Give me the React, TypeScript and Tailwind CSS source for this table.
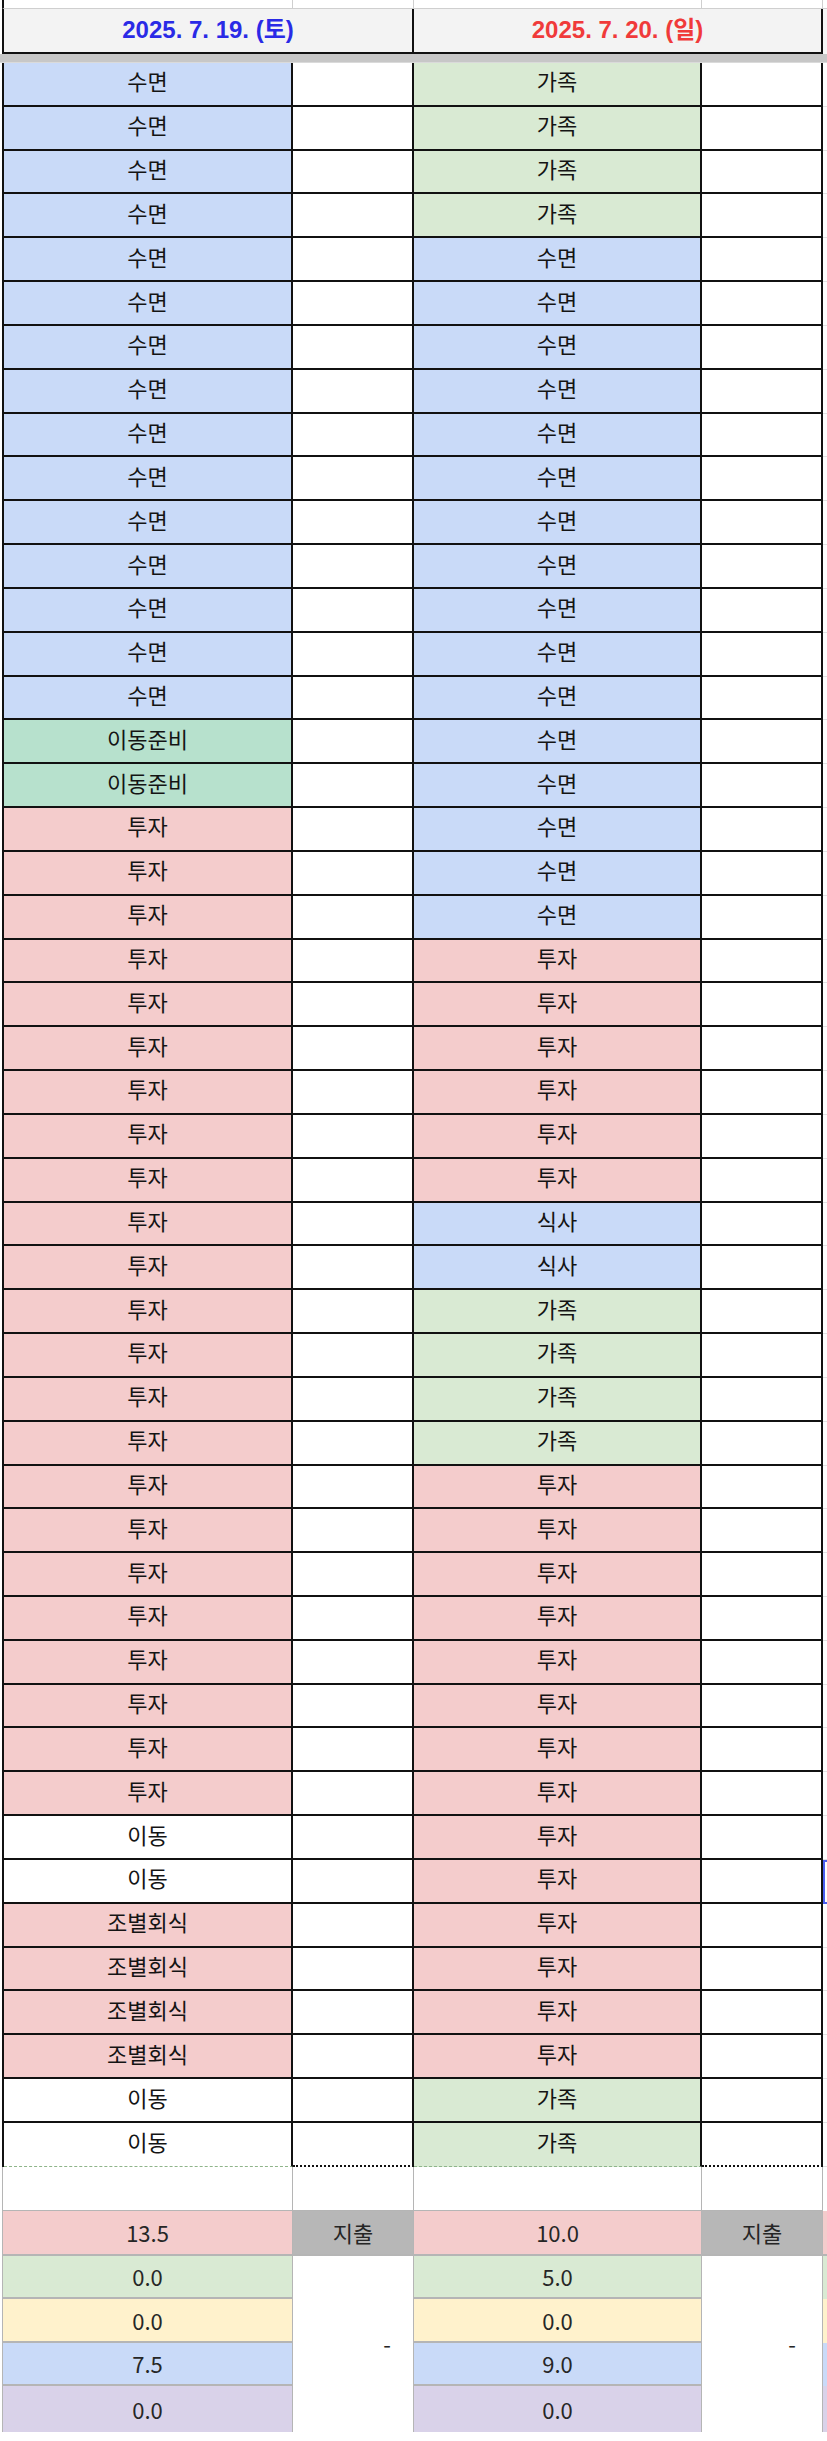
import React from "react";

const day1: string[] = [
  ...Array(15).fill("수면"),
  "이동준비",
  "이동준비",
  ...Array(23).fill("투자"),
  "이동",
  "이동",
  ...Array(4).fill("조별회식"),
  "이동",
  "이동",
];

const day2: string[] = [
  ...Array(4).fill("가족"),
  ...Array(16).fill("수면"),
  ...Array(6).fill("투자"),
  "식사",
  "식사",
  ...Array(4).fill("가족"),
  ...Array(14).fill("투자"),
  "가족",
  "가족",
];

const fill: Record<string, string> = {
  수면: "bg-[#c9daf8]",
  식사: "bg-[#c9daf8]",
  이동준비: "bg-[#b7e1cd]",
  투자: "bg-[#f4cccc]",
  조별회식: "bg-[#f4cccc]",
  가족: "bg-[#d9ead3]",
  이동: "bg-white",
};

function MainRow({ a, c, last, selected }: { a: string; c: string; last: boolean; selected: boolean }) {
  // last row closes with a dashed/dotted edge, like the sheet's range end
  const edgeA = last
    ? "border-b border-b-[#8fb58a] [border-bottom-style:dashed]"
    : "border-b-2 border-b-[#111]";
  const edgeB = last
    ? "border-b-2 border-b-[#111] [border-bottom-style:dotted]"
    : "border-b-2 border-b-[#111]";
  return (
    <div className="flex h-[43.83px] ml-[2px] border-l-2 border-[#111]">
      <div className={`w-[289px] border-r-2 border-r-[#111] ${edgeA} ${fill[a]} flex items-center justify-center pb-[6px]`}>
        {a}
      </div>
      <div className={`w-[121px] border-r-2 border-r-[#111] ${edgeB} bg-white`} />
      <div className={`w-[288px] border-r-2 border-r-[#111] ${edgeA} ${fill[c]} flex items-center justify-center pb-[6px]`}>
        {c}
      </div>
      <div className={`w-[121px] border-r-2 border-r-[#111] ${edgeB} bg-white`} />
      <div className={`flex-1 ${selected ? "border-2 border-[#4a5ff0] border-r-0" : "border-b border-b-[#e2e2e2]"} bg-white`} />
    </div>
  );
}

function SumCell({ bg, children }: { bg: string; children: React.ReactNode }) {
  return (
    <div className={`h-[44px] border-b-2 border-b-[#b5b5b5] ${bg} flex items-center justify-center`}>{children}</div>
  );
}

function SumColumn({ vals, w }: { vals: string[]; w: string }) {
  return (
    <div className={`${w} border-r border-r-[#b5b5b5] flex flex-col`}>
      <SumCell bg="bg-[#d9ead3]">{vals[0]}</SumCell>
      <SumCell bg="bg-[#fff2cc]">{vals[1]}</SumCell>
      <SumCell bg="bg-[#c9daf8]">{vals[2]}</SumCell>
      <div className="h-[46px] bg-[#d9d2e9] flex items-center justify-center">{vals[3]}</div>
    </div>
  );
}

export default function App() {
  return (
    <div className="w-[827px] h-[2441px] bg-white overflow-hidden text-[22px] text-[#141414] font-['Noto_Sans_CJK_KR',sans-serif]">
      {/* partially visible row above the header */}
      <div className="flex h-[9px] ml-[2px] border-l-2 border-[#111] border-b border-b-[#cfcfcf]">
        <div className="w-[289px] border-r border-r-[#cfcfcf]" />
        <div className="w-[121px] border-r border-r-[#cfcfcf]" />
        <div className="w-[288px] border-r border-r-[#cfcfcf]" />
        <div className="w-[121px] border-r border-r-[#cfcfcf]" />
        <div className="flex-1" />
      </div>

      {/* date header */}
      <div className="flex h-[45px] ml-[2px] border-l-2 border-[#111]">
        <div className="w-[410px] border-r-2 border-r-[#111] border-b-2 border-b-[#111] bg-[#f3f3f3] flex items-center justify-center pb-[2px] font-bold text-[24px] text-[#2a2ae6] font-['Liberation_Sans','Noto_Sans_CJK_KR',sans-serif]">
          2025. 7. 19. (토)
        </div>
        <div className="w-[409px] border-r-2 border-r-[#111] border-b-2 border-b-[#111] bg-[#f3f3f3] flex items-center justify-center pb-[2px] font-bold text-[24px] text-[#f03a3a] font-['Liberation_Sans','Noto_Sans_CJK_KR',sans-serif]">
          2025. 7. 20. (일)
        </div>
        <div className="flex-1 bg-[#f7f7f7]" />
      </div>

      {/* frozen pane divider */}
      <div className="h-[9px] bg-[#c7c7c7] border-b border-b-[#dadada]" />

      {day1.map((a, i) => (
        <MainRow key={i} a={a} c={day2[i]} last={i === day1.length - 1} selected={i === 41} />
      ))}

      {/* blank row */}
      <div className="flex h-[44px] ml-[2px] border-l border-[#b5b5b5]">
        <div className="w-[290px] border-r border-r-[#b5b5b5] border-b border-b-[#b5b5b5]" />
        <div className="w-[121px] border-r border-r-[#b5b5b5] border-b border-b-[#b5b5b5]" />
        <div className="w-[288px] border-r border-r-[#b5b5b5] border-b border-b-[#b5b5b5]" />
        <div className="w-[121px] border-r border-r-[#b5b5b5] border-b border-b-[#b5b5b5]" />
        <div className="flex-1" />
      </div>

      {/* totals */}
      <div className="flex h-[43px] ml-[2px] border-l border-[#b5b5b5] text-[#262626]">
        <div className="w-[290px] border-r border-r-[#b5b5b5] bg-[#f4cccc] flex items-center justify-center">13.5</div>
        <div className="w-[121px] border-r border-r-[#b5b5b5] bg-[#b7b7b7] flex items-center justify-center">지출</div>
        <div className="w-[288px] border-r border-r-[#b5b5b5] bg-[#f4cccc] flex items-center justify-center">10.0</div>
        <div className="w-[121px] border-r border-r-[#b5b5b5] bg-[#b7b7b7] flex items-center justify-center">지출</div>
        <div className="flex-1 bg-[#f4cccc]" />
      </div>

      <div className="flex h-[178px] ml-[2px] border-l border-[#b5b5b5] border-t-2 border-t-[#b5b5b5] text-[#262626]">
        <SumColumn w="w-[290px]" vals={["0.0", "0.0", "7.5", "0.0"]} />
        <div className="w-[121px] border-r border-r-[#b5b5b5] bg-white flex items-center justify-end pr-[22px]">-</div>
        <SumColumn w="w-[288px]" vals={["5.0", "0.0", "9.0", "0.0"]} />
        <div className="w-[121px] border-r border-r-[#b5b5b5] bg-white flex items-center justify-end pr-[26px]">-</div>
        <div className="flex-1 flex flex-col">
          <div className="h-[44px] bg-[#d9ead3]" />
          <div className="h-[44px] bg-[#fff2cc]" />
          <div className="h-[44px] bg-[#c9daf8]" />
          <div className="h-[46px] bg-[#d9d2e9]" />
        </div>
      </div>
    </div>
  );
}
